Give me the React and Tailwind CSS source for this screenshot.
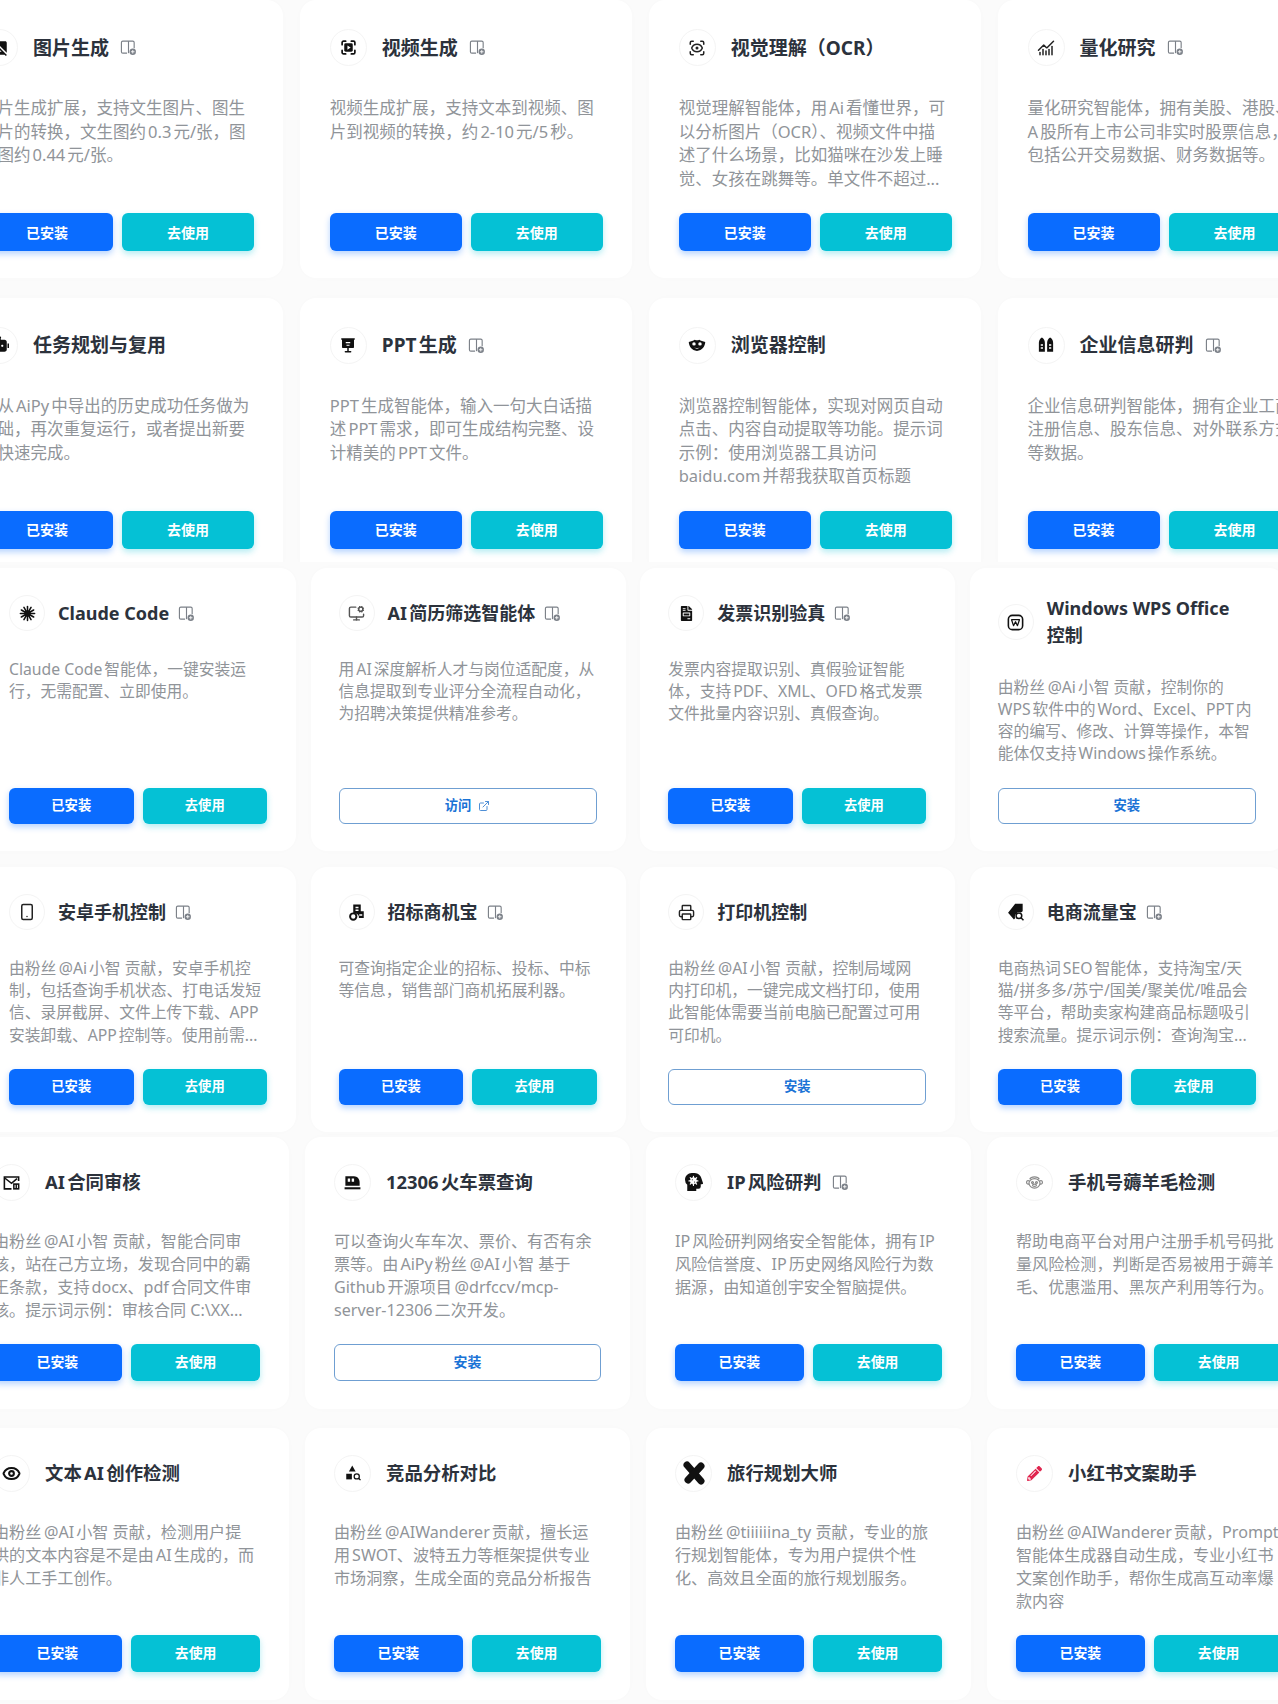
import React from 'react';
import { ScanEye, ChartNoAxesCombined, MonitorCog, Smartphone, Printer, Eye, ExternalLink } from 'lucide-react';
import { MdHideImage } from 'react-icons/md';
import { RiRobot2Fill } from 'react-icons/ri';
import { FaFileInvoice, FaHeadSideVirus, FaPencilAlt } from 'react-icons/fa';

const VideoIcon = () => (
  <svg width="17" height="17" viewBox="0 0 24 24" fill="none" stroke="#111" strokeWidth="2.4" strokeLinecap="round">
    <path d="M3 8V5a2 2 0 0 1 2-2h3M16 3h3a2 2 0 0 1 2 2v3M21 16v3a2 2 0 0 1-2 2h-3M8 21H5a2 2 0 0 1-2-2v-3" />
    <rect x="6" y="6" width="12" height="12" rx="2" fill="#111" stroke="none" />
    <path d="M10.5 9v6l4.5-3z" fill="#fff" stroke="none" />
  </svg>
);

const PptIcon = () => (
  <svg width="18" height="18" viewBox="0 0 24 24" fill="#111">
    <path d="M3 3h18v2h-1v10a1 1 0 0 1-1 1H5a1 1 0 0 1-1-1V5H3z" />
    <rect x="11" y="16" width="2" height="4" />
    <rect x="7.5" y="20" width="9" height="2" rx="1" />
    <path d="M9 8h6v1.8H9zM10 11.5h4v1.6h-4z" fill="#fff" />
  </svg>
);

const MaskIcon = () => (
  <svg width="18" height="18" viewBox="0 0 24 24" fill="#111">
    <path d="M1 8c3-1 6-1.500 8-3 2 1 4 1 6 0 2 1.500 5 2 8 3-.5 6-4 11-11 12C5 19 1.500 14 1 8z" />
    <circle cx="8" cy="10.500" r="2.300" fill="#fff" />
    <circle cx="16" cy="10.500" r="2.300" fill="#fff" />
    <path d="M8.500 15c2 1.500 5 1.500 7 0-1 2.500-6 2.500-7 0z" fill="#fff" />
  </svg>
);

const TwinTowersIcon = () => (
  <svg width="18" height="18" viewBox="0 0 24 24" fill="#111">
    <path d="M2.500 21V9c0-3 2-6 4-7 2 1 4 4 4 7v12z" />
    <path d="M13.500 21V9c0-3 2-6 4-7 2 1 4 4 4 7v12z" />
    <path d="M5 11h3v2H5zM5 15h3v2H5zM16 11h3v2h-3zM16 15h3v2h-3z" fill="#fff" />
  </svg>
);

const BurstIcon = () => (
  <svg width="17" height="17" viewBox="0 0 24 24" stroke="#111" strokeWidth="2.2" strokeLinecap="round">
    {[0, 30, 60, 90, 120, 150].map(a => (
      <line key={a} x1="12" y1="2" x2="12" y2="22" transform={`rotate(${a} 12 12)`} />
    ))}
    <circle cx="12" cy="12" r="4.5" fill="#111" stroke="none" />
  </svg>
);

const WpsIcon = () => (
  <svg width="19" height="19" viewBox="0 0 24 24" fill="none" stroke="#111">
    <rect x="3" y="3" width="18" height="18" rx="5" strokeWidth="2" />
    <path d="M7 8.500h10l-2.500 7.500L12 11l-2.500 5z" strokeWidth="1.600" strokeLinejoin="round" />
  </svg>
);

const TagSearchIcon = () => (
  <svg width="20" height="20" viewBox="0 0 24 24" fill="#111">
    <path d="M11 2h9v9l-2 1.5a5.5 5.5 0 0 0-7 7L9.5 21 2.5 13z" />
    <circle cx="15.5" cy="16.5" r="3.4" fill="none" stroke="#111" strokeWidth="1.8" />
    <path d="M18 19l3 3" stroke="#111" strokeWidth="1.8" />
  </svg>
);

const BidIcon = () => (
  <svg width="18" height="18" viewBox="0 0 24 24" fill="#111">
    <path d="M7 2h10v9h4v9h-6.500a5 5 0 0 0-4.500-6H7z" />
    <path d="M10 5h4v2h-4zM10 8.500h4v2h-4z" fill="#fff" />
    <circle cx="7" cy="18" r="4.200" fill="none" stroke="#111" strokeWidth="2.600" />
    <path d="M15 15h4v2h-4z" fill="#fff" />
  </svg>
);

const MailAiIcon = () => (
  <svg width="19" height="19" viewBox="0 0 24 24" fill="none" stroke="#111" strokeWidth="2">
    <path d="M21 10V5H3v15h9" />
    <path d="M3 6l9 7 7-6" />
    <rect x="14" y="13" width="8" height="8" fill="#111" stroke="none" />
    <path d="M16.5 15v4M19.5 15v4" stroke="#fff" strokeWidth="1.2" />
  </svg>
);

const TrainIcon = () => (
  <svg width="19" height="19" viewBox="0 0 24 24" fill="#111">
    <path d="M3 4h11c4 0 7 3.500 7 8v4H3z" />
    <path d="M6 7h3v4H6zM11 7h3v4h-3z" fill="#fff" />
    <rect x="2" y="18" width="20" height="2.600" />
  </svg>
);

const SheepFaceIcon = () => (
  <svg width="19" height="19" viewBox="0 0 24 24" fill="none" stroke="#8a8a8a" strokeWidth="1.500">
    <ellipse cx="12" cy="13" rx="7" ry="6" />
    <path d="M5.500 10C3.500 9 2 10 2 12s2 2.500 3.500 1.500M18.500 10c2-1 3.500 0 3.500 2s-2 2.500-3.500 1.500" />
    <path d="M6 8c1-2.500 3-3 6-3s5 .5 6 3" />
    <circle cx="9.500" cy="12" r="1.200" />
    <circle cx="14.500" cy="12" r="1.200" />
    <ellipse cx="12" cy="15.500" rx="2.500" ry="1.500" />
  </svg>
);

const ShapesSearchIcon = () => (
  <svg width="18" height="18" viewBox="0 0 24 24" fill="#111">
    <path d="M11 2l4.500 8h-9z" />
    <rect x="3" y="13" width="7.500" height="7.500" />
    <circle cx="17" cy="16.500" r="3.400" fill="none" stroke="#111" strokeWidth="1.700" />
    <path d="M19.500 19l2.500 2.500" stroke="#111" strokeWidth="1.700" />
  </svg>
);

const CrossIcon = () => (
  <svg width="24" height="24" viewBox="0 0 24 24" stroke="#111" strokeWidth="7" strokeLinecap="round">
    <line x1="5" y1="4" x2="19" y2="20" />
    <line x1="19" y1="5" x2="6" y2="19" />
  </svg>
);

const AddTag = () => (
  <svg width="17" height="17" viewBox="0 0 24 24" fill="none" stroke="#7b8088" strokeWidth="1.600" className="shrink-0 -ml-[4px]">
    <path d="M10 20H4a2 2 0 0 1-2-2V5a2 2 0 0 1 2-2h14a2 2 0 0 1 2 2v8" />
    <path d="M12 3v17" />
    <circle cx="18" cy="18" r="4.500" fill="#7b8088" stroke="none" />
    <path d="M18 15.500v5M15.500 18h5" stroke="#fff" strokeWidth="1.200" />
  </svg>
);

const lucide = (Icon, size = 17, color = '#222', sw = 2) => <Icon size={size} color={color} strokeWidth={sw} />;

const rowsA = [
  { title: '图片生成', tag: true, icon: <MdHideImage size={18} color="#111" />, lines: ['图片生成扩展，支持文生图片、图生', '图片的转换，文生图约0.3元/张，图', '生图约0.44元/张。'] },
  { title: '视频生成', tag: true, icon: <VideoIcon />, lines: ['视频生成扩展，支持文本到视频、图', '片到视频的转换，约2-10元/5秒。'] },
  { title: '视觉理解（OCR）', icon: lucide(ScanEye, 18), lines: ['视觉理解智能体，用Ai看懂世界，可', '以分析图片（OCR）、视频文件中描', '述了什么场景，比如猫咪在沙发上睡', '觉、女孩在跳舞等。单文件不超过...'] },
  { title: '量化研究', tag: true, icon: lucide(ChartNoAxesCombined, 18), lines: ['量化研究智能体，拥有美股、港股、', 'A股所有上市公司非实时股票信息，', '包括公开交易数据、财务数据等。'] },
  { title: '任务规划与复用', icon: <RiRobot2Fill size={18} color="#111" />, lines: ['可从AiPy中导出的历史成功任务做为', '基础，再次重复运行，或者提出新要', '求快速完成。'] },
  { title: 'PPT生成', tag: true, icon: <PptIcon />, lines: ['PPT生成智能体，输入一句大白话描', '述PPT需求，即可生成结构完整、设', '计精美的PPT文件。'] },
  { title: '浏览器控制', icon: <MaskIcon />, lines: ['浏览器控制智能体，实现对网页自动', '点击、内容自动提取等功能。提示词', '示例：使用浏览器工具访问', 'baidu.com并帮我获取首页标题'] },
  { title: '企业信息研判', tag: true, icon: <TwinTowersIcon />, lines: ['企业信息研判智能体，拥有企业工商', '注册信息、股东信息、对外联系方式', '等数据。'] },
];

const rowsB = [
  { title: 'Claude Code', tag: true, icon: <BurstIcon />, lines: ['Claude Code智能体，一键安装运', '行，无需配置、立即使用。'] },
  { title: 'AI简历筛选智能体', tag: true, action: 'visit', icon: lucide(MonitorCog, 17, '#555'), lines: ['用AI深度解析人才与岗位适配度，从', '信息提取到专业评分全流程自动化，', '为招聘决策提供精准参考。'] },
  { title: '发票识别验真', tag: true, icon: <FaFileInvoice size={15} color="#111" />, lines: ['发票内容提取识别、真假验证智能', '体，支持PDF、XML、OFD格式发票', '文件批量内容识别、真假查询。'] },
  { title: 'Windows WPS Office\n控制', action: 'install', icon: <WpsIcon />, lines: ['由粉丝\u2009@Ai小智 贡献，控制你的', 'WPS软件中的Word、Excel、PPT内', '容的编写、修改、计算等操作，本智', '能体仅支持Windows操作系统。'] },
  { title: '安卓手机控制', tag: true, icon: lucide(Smartphone, 18), lines: ['由粉丝\u2009@Ai小智 贡献，安卓手机控', '制，包括查询手机状态、打电话发短', '信、录屏截屏、文件上传下载、APP', '安装卸载、APP控制等。使用前需...'] },
  { title: '招标商机宝', tag: true, icon: <BidIcon />, lines: ['可查询指定企业的招标、投标、中标', '等信息，销售部门商机拓展利器。'] },
  { title: '打印机控制', action: 'install', icon: lucide(Printer, 17), lines: ['由粉丝\u2009@AI小智 贡献，控制局域网', '内打印机，一键完成文档打印，使用', '此智能体需要当前电脑已配置过可用', '可印机。'] },
  { title: '电商流量宝', tag: true, icon: <TagSearchIcon />, lines: ['电商热词SEO智能体，支持淘宝/天', '猫/拼多多/苏宁/国美/聚美优/唯品会', '等平台，帮助卖家构建商品标题吸引', '搜索流量。提示词示例：查询淘宝...'] },
];

const rowsC = [
  { title: 'AI合同审核', icon: <MailAiIcon />, lines: ['由粉丝\u2009@AI小智 贡献，智能合同审', '核，站在己方立场，发现合同中的霸', '王条款，支持docx、pdf合同文件审', '核。提示词示例：审核合同 C:\\XX...'] },
  { title: '12306火车票查询', action: 'install', icon: <TrainIcon />, lines: ['可以查询火车车次、票价、有否有余', '票等。由AiPy粉丝\u2009@AI小智 基于', 'Github开源项目\u2009@drfccv/mcp-', 'server-12306二次开发。'] },
  { title: 'IP风险研判', tag: true, icon: <FaHeadSideVirus size={18} color="#111" />, lines: ['IP风险研判网络安全智能体，拥有IP', '风险信誉度、IP历史网络风险行为数', '据源，由知道创宇安全智脑提供。'] },
  { title: '手机号薅羊毛检测', icon: <SheepFaceIcon />, lines: ['帮助电商平台对用户注册手机号码批', '量风险检测，判断是否易被用于薅羊', '毛、优惠滥用、黑灰产利用等行为。'] },
  { title: '文本AI创作检测', icon: lucide(Eye, 19, '#111', 2.6), lines: ['由粉丝\u2009@AI小智 贡献，检测用户提', '供的文本内容是不是由AI生成的，而', '非人工手工创作。'] },
  { title: '竞品分析对比', icon: <ShapesSearchIcon />, lines: ['由粉丝\u2009@AIWanderer贡献，擅长运', '用SWOT、波特五力等框架提供专业', '市场洞察，生成全面的竞品分析报告'] },
  { title: '旅行规划大师', icon: <CrossIcon />, lines: ['由粉丝\u2009@tiiiiiina_ty 贡献，专业的旅', '行规划智能体，专为用户提供个性', '化、高效且全面的旅行规划服务。'] },
  { title: '小红书文案助手', icon: <FaPencilAlt size={15} color="#e0264f" />, lines: ['由粉丝\u2009@AIWanderer贡献，Prompt', '智能体生成器自动生成，专业小红书', '文案创作助手，帮你生成高互动率爆', '款内容'] },
];

// each slice of the page is scaled a little differently
const sizeA = {
  card: 'pl-[30px] pr-[29px] pt-[29px] pb-[27px]',
  circle: 'w-[37px] h-[37px]',
  head: 'gap-[15px] mb-[30px]',
  title: 'text-[19px] leading-[28px]',
  desc: 'text-[16.5px] leading-[23.6px] mb-[22.800px]',
  btn: 'h-[38px] text-[14px]',
  row: 'gap-[9px]',
};
const sizeB = {
  card: 'pl-[28px] pr-[29px] pt-[27px] pb-[27px]',
  circle: 'w-[36px] h-[36px]',
  head: 'gap-[13px] mb-[26.600px]',
  title: 'text-[18px] leading-[27px]',
  desc: 'text-[15.75px] leading-[22.3px] mb-[23px]',
  btn: 'h-[36px] text-[13.3px]',
  row: 'gap-[9px]',
};
const sizeC = {
  card: 'pl-[29px] pr-[29px] pt-[27px] pb-[28px]',
  circle: 'w-[37px] h-[37px]',
  head: 'gap-[15px] mb-[29px]',
  title: 'text-[18.4px] leading-[28px]',
  desc: 'text-[16.1px] leading-[23.1px] mb-[22px]',
  btn: 'h-[37px] text-[13.9px]',
  row: 'gap-[9.5px]',
};

const Actions = ({ action, size }) => {
  if (action === 'visit' || action === 'install') {
    return (
      <button className={`w-full flex items-center justify-center gap-[7px] rounded-md border border-[#6f9fd2] bg-white font-bold text-[#1a73d6] ${size.btn}`}>
        {action === 'visit' ? '访问' : '安装'}
        {action === 'visit' && <ExternalLink size={12} color="#4f8fd6" />}
      </button>
    );
  }
  return (
    <div className={`flex ${size.row}`}>
      <button className={`flex-1 rounded-md bg-[#0a6cff] font-bold text-white shadow-[0_3px_6px_rgba(10,108,255,0.3)] ${size.btn}`}>已安装</button>
      <button className={`flex-1 rounded-md bg-[#05c1d5] font-bold text-white shadow-[0_3px_6px_rgba(5,193,213,0.3)] ${size.btn}`}>去使用</button>
    </div>
  );
};

const Card = ({ item, size }) => (
  <div className={`flex flex-col rounded-2xl bg-white shadow-[0_0_14px_rgba(0,0,0,0.01)] ${size.card}`}>
    <div className={`flex items-center ${size.head}`}>
      <div className={`flex shrink-0 items-center justify-center rounded-full border border-[#f4f4f4] bg-white ${size.circle}`}>
        {item.icon}
      </div>
      <h3 className={`whitespace-pre-line font-bold text-[#2c323c] ${size.title}`}>{item.title}</h3>
      {item.tag && <AddTag />}
    </div>
    <div className={`font-normal text-[#909499] ${size.desc}`}>
      {item.lines.map(line => (
        <div key={line} className="whitespace-nowrap">{line}</div>
      ))}
    </div>
    <div className="mt-auto">
      <Actions action={item.action} size={size} />
    </div>
  </div>
);

const App = () => (
  <div className="w-[1278px] h-[1704px] overflow-hidden bg-[#fbfbfb] font-['Noto_Sans','Noto_Sans_CJK_SC',sans-serif] [text-autospace:normal]">
    <section className="h-[562px] overflow-hidden -ml-[49px] grid grid-cols-[repeat(4,332px)] content-start gap-x-[16.850px] gap-y-[19.500px]">
      {rowsA.map(item => <Card key={item.title} item={item} size={sizeA} />)}
    </section>
    <section className="-ml-[19px] pt-[6px] grid grid-cols-[repeat(4,315px)] gap-x-[14.600px] gap-y-[16.500px]">
      {rowsB.map(item => <Card key={item.title} item={item} size={sizeB} />)}
    </section>
    <section className="-ml-[36px] pt-[4.500px] grid grid-cols-[repeat(4,325px)] gap-x-[16px] gap-y-[19px]">
      {rowsC.map(item => <Card key={item.title} item={item} size={sizeC} />)}
    </section>
  </div>
);

export default App;
